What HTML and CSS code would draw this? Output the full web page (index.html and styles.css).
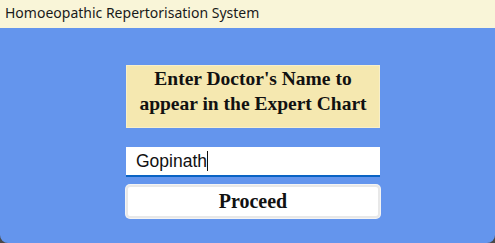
FILE: index.html
```html
<!DOCTYPE html>
<html lang="en">
<head>
    <meta charset="UTF-8">
    <title>Homoeopathic Repertorisation System</title>
    <link rel="stylesheet" href="styles.css">
</head>
<body>
    <div class="window">
        <div class="title-bar">Homoeopathic Repertorisation System</div>
        <div class="content">
            <div class="prompt">Enter Doctor's Name to<br>appear in the Expert Chart</div>
            <div class="name-input">Gopinath<span class="caret"></span></div>
            <button class="proceed">Proceed</button>
        </div>
    </div>
</body>
</html>
```

FILE: styles.css
```css
body {
    margin: 0;
    background-color: #4a4a4a;
    width: 495px;
    height: 243px;
    overflow: hidden;
}

.window {
    width: 495px;
    height: 243px;
    background-color: #6495ed;
    border-radius: 0 0 8px 8px;
    overflow: hidden;
    display: flex;
    flex-direction: column;
}

.title-bar {
    height: 28px;
    background-color: #f9f5d8;
    font-family: 'Noto Sans', sans-serif;
    font-size: 14px;
    line-height: 26px;
    padding-left: 5px;
    color: #1a1a1a;
}

.content {
    display: flex;
    flex-direction: column;
    align-items: flex-start;
    padding: 37px 0 0 126px;
}

.prompt {
    box-sizing: border-box;
    width: 254px;
    height: 63px;
    background-color: #f5e8b0;
    border: 1px solid #f8efc8;
    font-family: 'Liberation Serif', serif;
    font-weight: bold;
    font-size: 19.5px;
    line-height: 25px;
    text-align: center;
    padding-top: 0;
    color: #111;
}

.name-input {
    box-sizing: border-box;
    width: 254px;
    height: 30px;
    margin-top: 19px;
    background-color: #fff;
    border-bottom: 2px solid #0a63c4;
    font-family: 'Liberation Sans', Arial, sans-serif;
    font-size: 17.5px;
    line-height: 28px;
    padding-left: 10px;
    color: #111;
}

.caret {
    display: inline-block;
    width: 1px;
    height: 20px;
    background-color: #111;
    vertical-align: -4px;
}

.proceed {
    box-sizing: border-box;
    width: 254px;
    height: 33px;
    margin-top: 8px;
    background-color: #fff;
    border: 2px solid #e8e8e8;
    border-radius: 4px;
    box-shadow: 0 0 0 1px #f4f4f4;
    font-family: 'Liberation Serif', serif;
    font-weight: bold;
    font-size: 20px;
    color: #111;
    padding: 0;
}
```
